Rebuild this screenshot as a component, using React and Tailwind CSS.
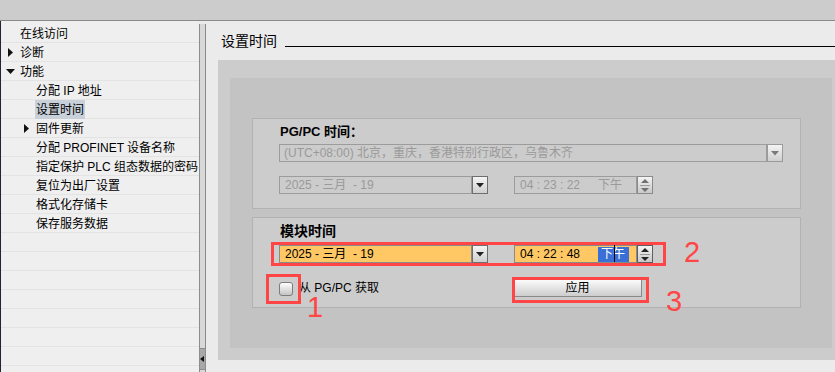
import React from 'react';

const FONT = { fontFamily: '"Liberation Sans", "Noto Sans CJK SC", sans-serif' };

const TREE = [
  { text: '在线访问', indent: 0 },
  { text: '诊断', indent: 0, arrow: 'right' },
  { text: '功能', indent: 0, arrow: 'down' },
  { text: '分配 IP 地址', indent: 1 },
  { text: '设置时间', indent: 1, selected: true },
  { text: '固件更新', indent: 1, arrow: 'right' },
  { text: '分配 PROFINET 设备名称', indent: 1 },
  { text: '指定保护 PLC 组态数据的密码', indent: 1 },
  { text: '复位为出厂设置', indent: 1 },
  { text: '格式化存储卡', indent: 1 },
  { text: '保存服务数据', indent: 1 },
  { text: '' }, { text: '' }, { text: '' }, { text: '' }, { text: '' }, { text: '' }, { text: '' },
];

function Arrow({ dir }) {
  if (dir === 'down') {
    return (
      <svg width="9" height="9" viewBox="0 0 9 9"><path d="M0 2 L9 2 L4.5 7 Z" fill="#111" /></svg>
    );
  }
  return (
    <svg width="9" height="9" viewBox="0 0 9 9"><path d="M2 0 L7 4.5 L2 9 Z" fill="#111" /></svg>
  );
}

function DropBtn({ dim }) {
  return (
    <div className={`w-[16px] h-[18px] border flex items-center justify-center bg-gradient-to-b from-[#f4f4f4] to-[#cfcfcf] ${dim ? 'border-[#9a9a9a]' : 'border-[#6e6e6e]'}`}>
      <svg width="8" height="5" viewBox="0 0 8 5"><path d="M0 0 L8 0 L4 4.5 Z" fill={dim ? '#7a7a7a' : '#222'} /></svg>
    </div>
  );
}

function SpinBtn({ dim }) {
  const c = dim ? '#707070' : '#222';
  return (
    <div className={`w-[16px] h-[18px] border flex flex-col items-center justify-center gap-[2px] bg-gradient-to-b from-[#f4f4f4] to-[#c8c8c8] ${dim ? 'border-[#8a8a8a]' : 'border-[#5e5e5e]'}`}>
      <svg width="8" height="4" viewBox="0 0 8 4"><path d="M0 4 L8 4 L4 0 Z" fill={c} /></svg>
      <div className="w-[10px] h-px bg-[#9a9a9a]" />
      <svg width="8" height="4" viewBox="0 0 8 4"><path d="M0 0 L8 0 L4 4 Z" fill={c} /></svg>
    </div>
  );
}

function DateField({ active }) {
  return (
    <div className="flex">
      <div className={`w-[193px] h-[18px] border flex items-center pl-[5px] text-[12px] ${active ? 'bg-[#ffc864] border-[#8a8a8a] text-black' : 'bg-[#cccccc] border-[#9c9c9c] text-[#9a9a9a]'}`}>
        2025 - 三月&nbsp;&nbsp;- 19
      </div>
      <DropBtn />
    </div>
  );
}

function TimeField({ active, time }) {
  return (
    <div className="flex">
      <div className={`w-[123px] h-[18px] border flex items-center pl-[5px] text-[12px] ${active ? 'bg-[#ffc864] border-[#8a8a8a] text-black' : 'bg-[#cccccc] border-[#9c9c9c] text-[#9a9a9a]'}`}>
        <span className="w-[78px]">{time}</span>
        {active ? (
          <span className="relative bg-[#3a6fd6] text-white px-[3px] w-[31px] h-[15px] flex items-center">
            下午
            <span className="absolute left-[16px] top-[-2px] w-px h-[17px] bg-black" />
          </span>
        ) : (
          <span>下午</span>
        )}
      </div>
      <SpinBtn dim={!active} />
    </div>
  );
}

export default function App() {
  return (
    <div className="relative w-[835px] h-[372px] overflow-hidden bg-[#ebebeb] flex flex-col" style={FONT}>
      <div className="h-[21px] shrink-0 bg-[#cccccc] border-b border-[#8a8a8a]" />

      <div className="flex flex-1 min-h-0">
        {/* tree */}
        <div className="w-[199px] shrink-0 bg-[#efefef] border-l border-[#1f2436] pt-[3px] overflow-hidden">
          {TREE.map((row, i) => (
            <div key={i} className="h-[19px] border-b border-[#e3e3e3] flex items-center text-[12px] text-black">
              <div className={`${row.indent ? 'w-[34px]' : 'w-[18px]'} shrink-0 flex justify-end pr-[4px]`}>
                {row.arrow && <Arrow dir={row.arrow} />}
              </div>
              {row.text && (
                <span className={`px-[1px] h-[19px] pt-[1px] flex items-center ${row.selected ? 'bg-[#c8d0da]' : ''}`}>{row.text}</span>
              )}
            </div>
          ))}
        </div>

        {/* scrollbar */}
        <div className="w-[7px] shrink-0 mt-[3px] bg-[#d8d8d8] border-x border-[#8c8c8c] flex flex-col justify-end">
          <div className="h-[22px] mb-[2px] bg-[#a8a8a8] border-y border-[#8c8c8c] flex items-center">
            <svg width="5" height="6" viewBox="0 0 5 6"><path d="M4 0 L0 3 L4 6 Z" fill="#111" /></svg>
          </div>
        </div>

        {/* content */}
        <div className="flex-1 min-w-0 flex flex-col pl-[12px] overflow-hidden">
          <div className="flex items-end h-[29px] pl-[3px] pr-0">
            <span className="text-[14px] leading-[18px] text-black">设置时间</span>
            <div className="flex-1 h-[1.5px] bg-black ml-[8px] mb-[3px]" />
          </div>

          <div className="mt-[10px] w-[640px] h-[300px] bg-[#cccccc] pl-[12px] pt-[18px]">
            <div className="w-[602px] h-[270px] bg-[#c3c3c3] pl-[22px] pt-[40px] flex flex-col gap-[8px]">
              {/* PG/PC time */}
              <div className="w-[549px] h-[91px] border border-[#b2b2b2] bg-[#cccccc] pl-[26px] pt-[5px]">
                <div className="text-[13px] font-bold leading-[16px] text-black pl-[1px]">PG/PC 时间：</div>
                <div className="mt-[4px] flex w-[504px]">
                  <div className="flex-1 h-[18px] border border-[#9c9c9c] flex items-center pl-[4px] text-[12px] text-[#9a9a9a]">
                    (UTC+08:00) 北京，重庆，香港特别行政区，乌鲁木齐
                  </div>
                  <DropBtn dim />
                </div>
                <div className="mt-[14px] flex gap-[26px]">
                  <DateField />
                  <TimeField time="04 : 23 : 22" />
                </div>
              </div>

              {/* module time */}
              <div className="w-[549px] h-[91px] border border-[#b2b2b2] bg-[#cccccc] pl-[26px] pt-[4px]">
                <div className="text-[14px] font-bold leading-[18px] text-black pl-[1px]">模块时间</div>
                <div className="mt-[5px] flex gap-[26px]">
                  <DateField active />
                  <TimeField active time="04 : 22 : 48" />
                </div>
                <div className="mt-[16px] flex items-center">
                  <div className="w-[14px] h-[14px] mt-[2px] rounded-[3px] border border-[#7d7d7d] bg-gradient-to-b from-[#ffffff] to-[#c4c4c4]" />
                  <span className="ml-[6px] text-[12px] text-black">从 PG/PC 获取</span>
                  <button className="ml-[134px] w-[129px] h-[18px] border border-[#8a8a8a] bg-gradient-to-b from-[#fbfbfb] to-[#cdcdcd] text-[12px] leading-[16px] text-black">
                    应用
                  </button>
                </div>
              </div>
            </div>
          </div>
        </div>
      </div>

      {/* annotations */}
      <div className="absolute left-[271px] top-[242px] w-[395px] h-[24px] border-[3px] border-[#ff4545]" />
      <div className="absolute left-[266px] top-[274px] w-[35px] h-[30px] border-[3px] border-[#ff4545]" />
      <div className="absolute left-[512px] top-[277px] w-[137px] h-[26px] border-[3px] border-[#ff4545]" />
      <span className="absolute left-[684px] top-[236px] text-[29px] leading-[32px] text-[#ff4545]">2</span>
      <span className="absolute left-[307px] top-[291px] text-[29px] leading-[32px] text-[#ff4545]">1</span>
      <span className="absolute left-[666px] top-[285px] text-[29px] leading-[32px] text-[#ff4545]">3</span>
    </div>
  );
}
